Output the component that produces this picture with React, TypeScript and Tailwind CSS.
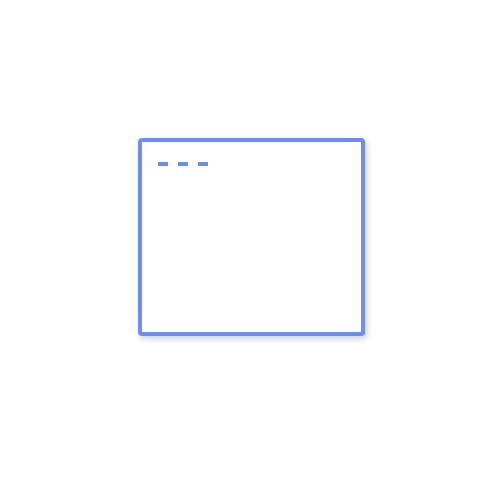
export default function App() {
  return (
    <div className="w-[500px] h-[500px] bg-white pt-[138px] pl-[138px]">
      <div className="w-[227px] h-[198px] border-4 border-[#6b8ef0] rounded-[4px] bg-white shadow-[2px_3px_6px_rgba(0,0,0,0.18)] pl-[16px] pt-[20px]">
        <div className="flex gap-[10px]">
          <div className="w-[10px] h-[4px] bg-[#6b8ef0]" />
          <div className="w-[10px] h-[4px] bg-[#6b8ef0]" />
          <div className="w-[10px] h-[4px] bg-[#6b8ef0]" />
        </div>
      </div>
    </div>
  );
}
